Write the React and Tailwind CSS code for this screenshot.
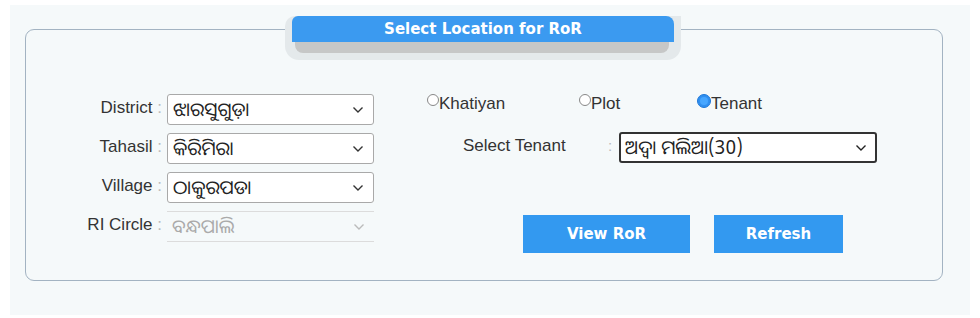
import React from "react";

const odia = { fontFamily: '"Noto Sans Oriya","Noto Sans","DejaVu Sans",sans-serif' };

function Chevron({ color = "#333" }) {
  return (
    <svg width="12" height="8" viewBox="0 0 12 8" className="shrink-0">
      <polyline points="1.5,1.5 6,6 10.5,1.5" fill="none" stroke={color} strokeWidth="1.4" />
    </svg>
  );
}

function Row({ label, value, disabled }) {
  return (
    <div className="flex items-center h-[31px] mb-[8px]">
      <div className="w-[141px] text-right pr-[5px] pb-[5px] text-[17px] text-[#333] leading-none">
        {label} <span className="text-[#bbb]">:</span>
      </div>
      {disabled ? (
        <div className="w-[207px] h-[31px] border-t border-b border-[#dcdcdc] flex items-center justify-between pl-[5px] pr-[9px]">
          <span className="text-[19px] text-[#aaa] leading-none" style={odia}>{value}</span>
          <Chevron color="#bbb" />
        </div>
      ) : (
        <div className="w-[207px] h-[31px] border border-[#a9a9a9] rounded-[3px] bg-white flex items-center justify-between pl-[5px] pr-[9px]">
          <span className="text-[19px] text-[#222] leading-none" style={odia}>{value}</span>
          <Chevron />
        </div>
      )}
    </div>
  );
}

function Radio({ label, checked, width }) {
  return (
    <div className="flex items-start" style={{ width }}>
      {checked ? (
        <span className="mt-[1px] w-[14px] h-[14px] rounded-full bg-[#2f8ff0] border border-[#1f78d8] flex items-center justify-center shrink-0">
          <span className="w-[8px] h-[8px] rounded-full bg-[#46a6ff]" />
        </span>
      ) : (
        <span className="mt-[1px] w-[12px] h-[12px] rounded-full border border-[#888] bg-white shrink-0" />
      )}
      <span className="text-[17px] text-[#333] leading-[20px] mt-[1px]">{label}</span>
    </div>
  );
}

export default function App() {
  return (
    <div className="w-[980px] h-[318px] bg-white pt-[5px] pl-[10px]" style={{ fontFamily: '"Liberation Sans", Arial, sans-serif' }}>
      <div className="w-[960px] h-[310px] bg-[#f5f9fa] pt-[24px] pl-[15px]">
        <div className="relative w-[918px] h-[252px] border border-[#a3b3c2] rounded-[9px] flex">
          {/* legend */}
          <div className="absolute left-[259px] top-[-14px] w-[396px] h-[44px] bg-[#e4e9eb] rounded-b-[14px] rounded-tl-[10px] pl-[7px]">
            <div className="w-[382px] h-[26px] bg-[#3b9af0] rounded-tl-[6px] rounded-tr-[8px] flex items-center justify-center">
              <span className="text-white font-bold text-[15px]" style={{ fontFamily: '"DejaVu Sans", Verdana, sans-serif' }}>
                Select Location for RoR
              </span>
            </div>
            <div className="ml-[3px] w-[374px] h-[11px] bg-[#c6c7c7] rounded-b-[8px]" />
          </div>

          {/* left column */}
          <div className="pt-[64px]">
            <Row label="District" value="ଝାରସୁଗୁଡ଼ା" />
            <Row label="Tahasil" value="କିରିମିରା" />
            <Row label="Village" value="ଠାକୁରପଡା" />
            <Row label="RI Circle" value="ବନ୍ଧପାଲି" disabled />
          </div>

          {/* right column */}
          <div className="ml-[53px] pt-[63px]">
            <div className="flex h-[20px]">
              <Radio label="Khatiyan" width={152} />
              <Radio label="Plot" width={118} />
              <Radio label="Tenant" checked width={90} />
            </div>
            <div className="flex items-center mt-[19px] ml-[36px] h-[31px]">
              <div className="w-[145px] pb-[5px] text-[17px] text-[#333] leading-none">Select Tenant</div>
              <span className="text-[#bbb] text-[15px] w-[11px] pb-[2px]">:</span>
              <div className="w-[258px] h-[31px] border-2 border-[#333] rounded-[3px] bg-white flex items-center justify-between pl-[4px] pr-[8px]">
                <span className="text-[19px] text-[#222] leading-none" style={odia}>ଅଦ୍ୱା ମଲିଆ(30)</span>
                <Chevron color="#222" />
              </div>
            </div>
            <div className="flex gap-[24px] mt-[52px] ml-[96px]">
              <button className="w-[167px] h-[38px] bg-[#3399f0] text-white font-bold text-[15px]" style={{ fontFamily: '"DejaVu Sans", Verdana, sans-serif' }}>
                View RoR
              </button>
              <button className="w-[129px] h-[38px] bg-[#3399f0] text-white font-bold text-[15px]" style={{ fontFamily: '"DejaVu Sans", Verdana, sans-serif' }}>
                Refresh
              </button>
            </div>
          </div>
        </div>
      </div>
    </div>
  );
}
